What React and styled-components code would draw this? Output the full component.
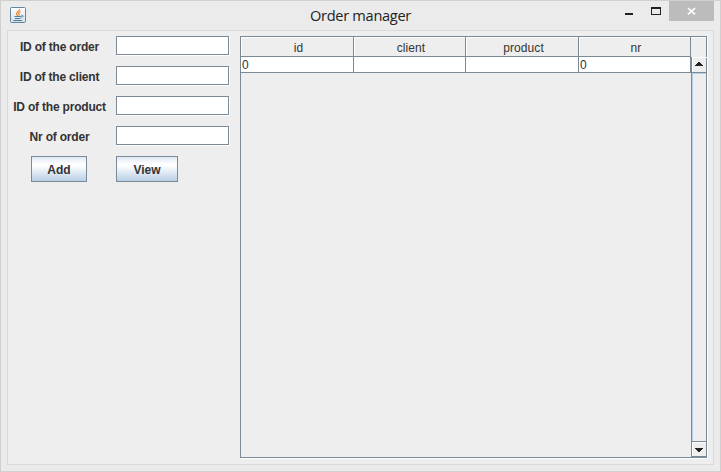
import React from "react";
import styled, { createGlobalStyle } from "styled-components";

const line = "#7a8a99";

const Global = createGlobalStyle`
  * { box-sizing: border-box; }
  body { margin: 0; background: #ebebeb; }
`;

const Window = styled.div`
  width: 721px;
  height: 472px;
  border: 1px solid #d0d0d0;
  background: #ebebeb;
  font: 12px/16px "Liberation Sans", Arial, sans-serif;
  color: #333;
  overflow: hidden;
`;

const TitleBar = styled.header`
  display: grid;
  grid-template-columns: 1fr auto 1fr;
  height: 29px;
`;

const AppIcon = styled.svg`
  width: 16px;
  height: 16px;
  margin: 6px 0 0 9px;
`;

const Title = styled.h1`
  margin: 0;
  font: 400 14.6px/29px "Open Sans", "Noto Sans", sans-serif;
  letter-spacing: -0.3px;
  color: #222;
`;

const Controls = styled.div`
  display: flex;
  justify-content: flex-end;
  padding-right: 6px;
`;

const ControlIcon = styled.svg`
  width: ${(p) => p.$width}px;
  height: 20px;
  background: ${(p) => (p.$close ? "#bcbcbc" : "transparent")};
`;

const Content = styled.main`
  display: flex;
  width: 707px;
  height: 435px;
  margin-left: 6px;
  border: 1px solid #dadada;
  background: #eee;
`;

const Form = styled.form`
  display: grid;
  grid-template-columns: 102px 114px;
  grid-template-rows: repeat(4, 20px) 26px;
  column-gap: 6px;
  row-gap: 10px;
  align-content: start;
  width: 232px;
  padding-top: 5px;
`;

const Label = styled.label`
  padding-left: 1px;
  font-weight: 700;
  line-height: 22px;
  letter-spacing: -0.2px;
  text-align: center;
  white-space: nowrap;
`;

const Field = styled.input`
  width: 113px;
  height: 19px;
  padding: 0 2px;
  border: 1px solid ${line};
  border-radius: 0;
  outline: 0;
  background: #fff;
  box-shadow: 1px 1px 0 #fff;
  font: inherit;
`;

const Button = styled.button`
  width: ${(p) => p.$width}px;
  height: 26px;
  padding: 1px 0 0;
  justify-self: ${(p) => (p.$center ? "center" : "start")};
  border: 1px solid ${line};
  background: linear-gradient(#dde8f3 0%, #fff 30%, #fff 36%, #b8cfe5 100%);
  font: inherit;
  font-weight: 700;
  color: inherit;
`;

const ScrollPane = styled.section`
  display: grid;
  grid-template-columns: 450px 15px;
  grid-template-rows: 20px 400px;
  width: 467px;
  height: 422px;
  margin-top: 5px;
  border: 1px solid ${line};
  box-shadow: 1px 1px 0 #fff;
`;

const columns = "113px 112px 113px 112px";

const HeaderRow = styled.div`
  display: grid;
  grid-template-columns: ${columns};
  grid-template-rows: 20px;
`;

const HeaderCell = styled.div`
  padding-left: 3px;
  border-right: 1px solid ${line};
  border-bottom: 1px solid ${line};
  box-shadow: inset 1px 1px 0 #fff;
  line-height: 22px;
  letter-spacing: 0.1px;
  text-align: center;
`;

const Corner = styled.div`
  box-shadow: inset 0 1px 0 #fff;
`;

const Row = styled.div`
  display: grid;
  grid-template-columns: ${columns};
  grid-template-rows: 16px;
`;

const Cell = styled.div`
  padding-left: 1px;
  border-right: 1px solid ${line};
  border-bottom: 1px solid ${line};
  background: #fff;
`;

const ScrollBar = styled.div`
  display: grid;
  grid-template-rows: 16px 1fr 16px;
  border-left: 1px solid ${line};
`;

const ArrowButton = styled.svg`
  width: 14px;
  height: 16px;
  display: block;
  overflow: visible;
`;

const Thumb = styled.div`
  border-left: 1px solid #b8cfe5;
  border-top: 1px solid #b8cfe5;
`;

const fields = ["ID of the order", "ID of the client", "ID of the product", "Nr of order"];
const headings = ["id", "client", "product", "nr"];
const record = ["0", "", "", "0"];

function JavaIcon() {
  return (
    <AppIcon viewBox="0 0 16 16">
      <defs>
        <linearGradient id="tile" x2="0" y2="1">
          <stop stopColor="#fff" />
          <stop offset="1" stopColor="#d3dfe9" />
        </linearGradient>
      </defs>
      <rect x=".5" y=".5" width="15" height="15" rx="1" fill="url(#tile)" stroke="#66869b" />
      <path d="M9.5 2C10 4 6 5 6.5 7c.2.8 1 1.2 1.2 2M10.5 4.5C8.5 5.5 8 6.5 9 7.2c.4.5.2 1-.2 1.5" fill="none" stroke="#ed8a35" strokeWidth="1.2" />
      <path d="M4.5 9.5h7M5 11.5h5.5M3.5 13.5h8.5M11.5 8.5c2-.6 2.3 1.3 0 2" fill="none" stroke="#4d7c9c" />
    </AppIcon>
  );
}

export default function App() {
  return (
    <Window>
      <Global />
      <TitleBar>
        <JavaIcon />
        <Title>Order manager</Title>
        <Controls>
          <ControlIcon $width={27} viewBox="0 0 27 20">
            <path d="M10 12h8v2h-8z" fill="#222" />
          </ControlIcon>
          <ControlIcon $width={27} viewBox="0 0 27 20">
            <path d="M9 6h10v8H9zM10 8v5h8V8z" fill="#222" fillRule="evenodd" />
          </ControlIcon>
          <ControlIcon $width={45} $close viewBox="0 0 45 20">
            <path d="M19 7.2l7 6.2M26 7.2l-7 6.2" stroke="#fff" strokeWidth="1.7" />
          </ControlIcon>
        </Controls>
      </TitleBar>
      <Content>
        <Form onSubmit={(e) => e.preventDefault()}>
          {fields.map((name, i) => (
            <React.Fragment key={name}>
              <Label htmlFor={`field-${i}`}>{name}</Label>
              <Field id={`field-${i}`} />
            </React.Fragment>
          ))}
          <Button $width={56} $center>Add</Button>
          <Button $width={62}>View</Button>
        </Form>
        <ScrollPane>
          <HeaderRow>
            {headings.map((h) => (
              <HeaderCell key={h}>{h}</HeaderCell>
            ))}
          </HeaderRow>
          <Corner />
          <div>
            <Row>
              {record.map((value, i) => (
                <Cell key={i}>{value}</Cell>
              ))}
            </Row>
          </div>
          <ScrollBar>
            <ArrowButton viewBox="0 0 14 16" shapeRendering="crispEdges">
              <path d="M0 .5h15M.5 1v14" stroke="#fff" />
              <path d="M0 15.5h14" stroke={line} />
              <path d="M6 5h2v1h1v1h1v1h1v1H3V8h1V7h1V6h1z" fill="#222" />
            </ArrowButton>
            <Thumb />
            <ArrowButton viewBox="0 0 14 16" shapeRendering="crispEdges">
              <path d="M0 1.5h14M.5 1v14" stroke="#fff" />
              <path d="M0 .5h14M0 15.5h14" stroke={line} />
              <path d="M3 7h8v1h-1v1H9v1H8v1H6v-1H5V9H4V8H3z" fill="#222" />
            </ArrowButton>
          </ScrollBar>
        </ScrollPane>
      </Content>
    </Window>
  );
}
